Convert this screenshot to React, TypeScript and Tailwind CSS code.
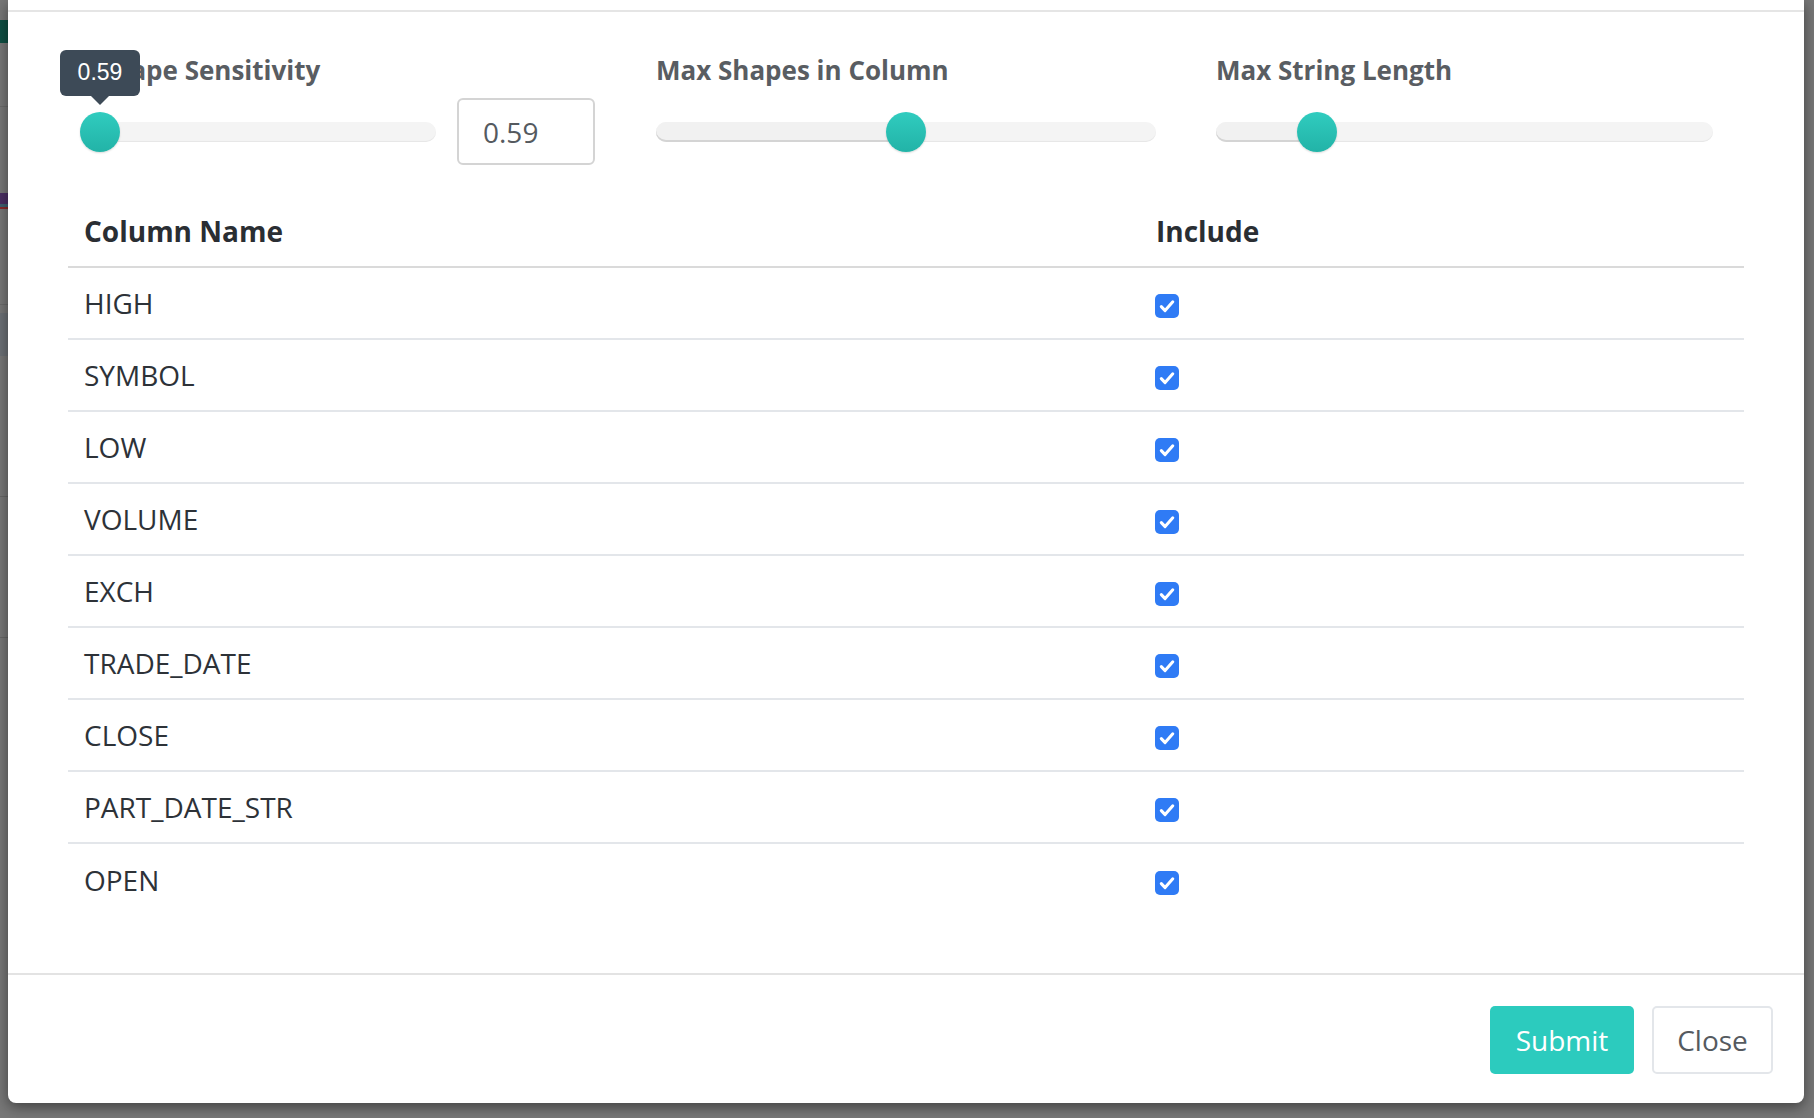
const columns = ['HIGH', 'SYMBOL', 'LOW', 'VOLUME', 'EXCH', 'TRADE_DATE', 'CLOSE', 'PART_DATE_STR', 'OPEN'];

function Checkbox() {
  return (
    <svg width="24" height="24" viewBox="0 0 24 24">
      <rect x="0" y="0" width="24" height="24" rx="5" fill="#2f7bf5" />
      <path d="M6.3 12.6l3.8 4L17.8 7.8" fill="none" stroke="#fff" strokeWidth="3" strokeLinecap="round" strokeLinejoin="round" />
    </svg>
  );
}

function Slider({ width, thumbLeft, tooltip }: { width: number; thumbLeft: number; tooltip?: string }) {
  return (
    <div className="relative h-[20px] rounded-full bg-[#f4f4f4] shadow-[inset_0_-1px_1px_rgba(0,0,0,0.06)]" style={{ width }}>
      {/* filled part */}
      <div className="h-full rounded-full bg-[#f1f1f1] shadow-[inset_0_-2px_0_#d4d4d4]" style={{ width: thumbLeft + 20 }} />
      <div className="absolute top-[-10px] h-[40px] w-[40px] rounded-full bg-gradient-to-b from-[#30ccbf] to-[#22b3a7] shadow-[0_1px_2px_rgba(0,0,0,0.15)]" style={{ left: thumbLeft }}>
        {tooltip && (
          <div className="absolute left-[-20px] top-[-62px] w-[80px] flex flex-col items-center">
            <div className="w-[80px] h-[46px] rounded-[6px] bg-[#3d4a57] flex items-center justify-center text-white text-[23px] font-['Liberation_Sans',sans-serif]">
              {tooltip}
            </div>
            <div className="w-0 h-0 border-l-[9px] border-r-[9px] border-t-[9px] border-l-transparent border-r-transparent border-t-[#3d4a57]" />
          </div>
        )}
      </div>
    </div>
  );
}

export default function App() {
  return (
    <div className="h-screen w-full bg-[#777777] overflow-hidden flex font-['Open_Sans',sans-serif]">
      {/* dimmed page edge behind the modal */}
      <div className="w-[8px] shrink-0 flex flex-col">
        <div className="h-[20px]" />
        <div className="h-[23px] bg-[#0f4f43]" />
        <div className="h-[63px]" />
        <div className="h-[1px] bg-[#6a6a6a]" />
        <div className="h-[86px]" />
        <div className="h-[11px] bg-[#4b2f63]" />
        <div className="h-[3px] bg-[#3f6070]" />
        <div className="h-[2px] bg-[#8a2b2b]" />
        <div className="h-[95px]" />
        <div className="h-[1px] bg-[#6a6a6a]" />
        <div className="h-[8px]" />
        <div className="h-[43px] bg-[#6c7075]" />
        <div className="h-[140px]" />
        <div className="h-[1px] bg-[#666]" />
        <div className="h-[140px]" />
        <div className="h-[1px] bg-[#666]" />
      </div>

      <div className="w-[1796px] h-[1103px] shrink-0 bg-white rounded-b-[8px] shadow-[0_4px_14px_rgba(0,0,0,0.45)] flex flex-col">
        {/* header remainder */}
        <div className="h-[12px] border-b-2 border-[#e5e5e5]" />

        {/* body */}
        <div className="flex-1 px-[60px] pt-[42px]">
          <div className="flex gap-[60px] pl-[12px]">
            <div className="w-[516px]">
              <div className="pl-[19px] text-[26px] leading-[32px] font-bold text-[#595d62]">Shape Sensitivity</div>
              <div className="mt-[12px] h-[67px] flex items-center gap-[21px]">
                <Slider width={356} thumbLeft={0} tooltip="0.59" />
                <div className="w-[138px] h-[67px] border-2 border-[#d4d4d4] rounded-[6px] flex items-center pl-[24px] text-[28px] text-[#555a5f]">
                  0.59
                </div>
              </div>
            </div>
            <div className="w-[500px]">
              <div className="text-[26px] leading-[32px] font-bold text-[#595d62]">Max Shapes in Column</div>
              <div className="mt-[12px] h-[67px] flex items-center">
                <Slider width={500} thumbLeft={230} />
              </div>
            </div>
            <div className="w-[503px]">
              <div className="text-[26px] leading-[32px] font-bold text-[#595d62]">Max String Length</div>
              <div className="mt-[12px] h-[67px] flex items-center">
                <Slider width={497} thumbLeft={81} />
              </div>
            </div>
          </div>

          {/* table */}
          <div className="mt-[47px]">
            <div className="flex border-b-2 border-[#dadada] pb-[16px] text-[28px] leading-[38px] font-bold text-[#2a2e33]">
              <div className="w-[1072px] pl-[16px]">Column Name</div>
              <div className="pl-[16px]">Include</div>
            </div>
            {columns.map((name, i) => (
              <div
                key={name}
                className={`flex items-center h-[72px] text-[28px] text-[#2d3238] ${i < columns.length - 1 ? 'border-b-2 border-[#e3e6ea]' : ''}`}
              >
                <div className="w-[1072px] pl-[16px]">{name}</div>
                <div className="pl-[15px] pt-[5px] flex items-center">
                  <Checkbox />
                </div>
              </div>
            ))}
          </div>
        </div>

        {/* footer */}
        <div className="h-[130px] border-t-2 border-[#e3e3e3] flex items-center justify-end gap-[18px] pr-[31px] pt-[2px]">
          <button className="w-[144px] h-[68px] rounded-[5px] bg-[#2ccbbe] text-white text-[28px]">Submit</button>
          <button className="w-[121px] h-[68px] rounded-[5px] border-2 border-[#e3e6ea] bg-white text-[#555a5f] text-[28px]">Close</button>
        </div>
      </div>

      <div className="w-[10px] shrink-0" />
    </div>
  );
}
